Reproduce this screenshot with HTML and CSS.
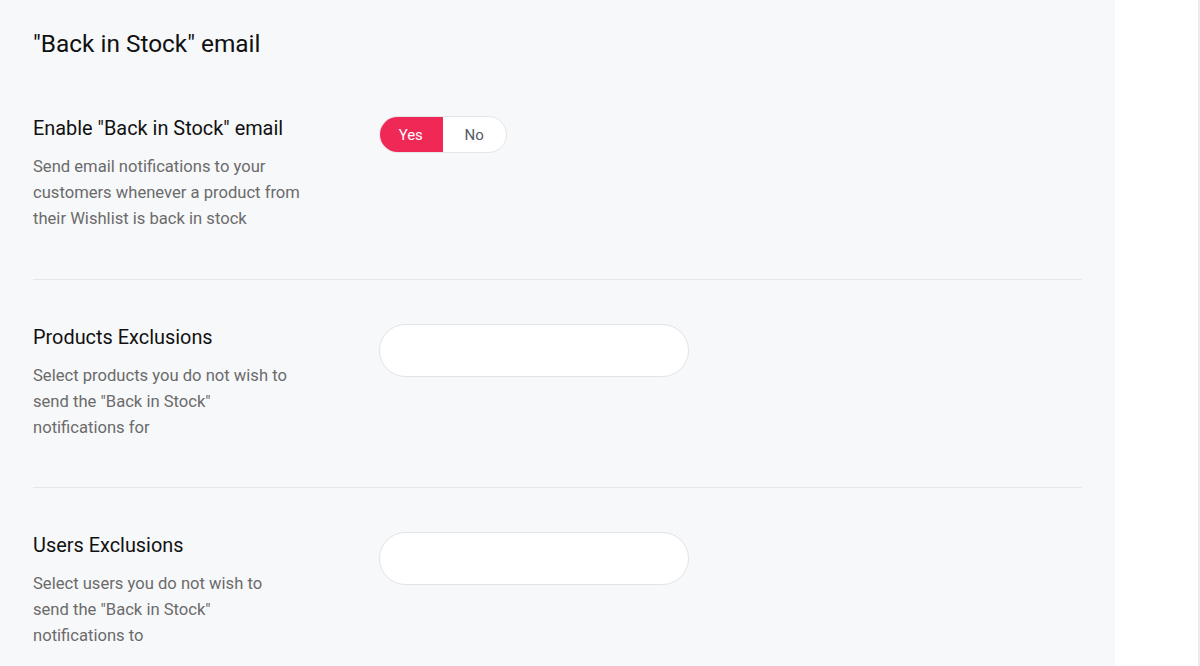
FILE: index.html
```html
<!DOCTYPE html>
<html lang="en">
<head>
<meta charset="utf-8">
<title>Back in Stock email</title>
<link rel="stylesheet" href="styles.css">
</head>
<body>
<div class="page">
  <main class="panel">
    <h1 class="heading">"Back in Stock" email</h1>

    <section class="row first">
      <div class="label-col">
        <h2 class="title">Enable "Back in Stock" email</h2>
        <p class="desc">Send email notifications to your customers whenever a product from their Wishlist is back in stock</p>
      </div>
      <div class="control-col">
        <div class="toggle">
          <span class="opt opt-on">Yes</span>
          <span class="opt opt-off">No</span>
        </div>
      </div>
    </section>

    <section class="row">
      <div class="label-col">
        <h2 class="title">Products Exclusions</h2>
        <p class="desc">Select products you do not wish to send the "Back in Stock" notifications for</p>
      </div>
      <div class="control-col">
        <div class="pill-input"></div>
      </div>
    </section>

    <section class="row last">
      <div class="label-col">
        <h2 class="title">Users Exclusions</h2>
        <p class="desc">Select users you do not wish to send the "Back in Stock" notifications to</p>
      </div>
      <div class="control-col">
        <div class="pill-input"></div>
      </div>
    </section>
  </main>
  <aside class="side"></aside>
</div>
</body>
</html>
```

FILE: styles.css
```css
* { box-sizing: border-box; }
html, body { margin: 0; padding: 0; height: 100%; }
body {
  font-family: Roboto, "Noto Sans", Arial, sans-serif;
  background: #ffffff;
  overflow: hidden;
}
.page {
  display: flex;
  height: 666px;
}
.panel {
  width: 1115px;
  flex: 0 0 1115px;
  background: #f7f8fa;
  padding: 28px 33px 0 33px;
}
.side {
  flex: 1;
  background: #ffffff;
  border-right: 2px solid #ececec;
}
.heading {
  margin: 0;
  font-size: 24.4px;
  line-height: 32px;
  font-weight: 400;
  color: #111111;
}
.row {
  display: flex;
  padding: 46px 0 46px;
  border-bottom: 1px solid #e6e7ea;
}
.row.first { padding-top: 57px; padding-bottom: 47px; }
.row.last { border-bottom: none; }
.label-col {
  flex: 0 0 346px;
  width: 346px;
}
.title {
  margin: 0;
  font-size: 19.9px;
  line-height: 24px;
  font-weight: 400;
  color: #111111;
}
.desc {
  margin: 13px 0 0;
  max-width: 268px;
  font-size: 16.6px;
  line-height: 26px;
  color: #6b6b6b;
}
.control-col {
  flex: 1;
  margin-top: -1px;
}
.toggle {
  display: flex;
  width: 128px;
  height: 37px;
  border-radius: 19px;
  overflow: hidden;
  border: 1px solid #e4e5e8;
  background: #ffffff;
}
.opt {
  flex: 1;
  display: flex;
  align-items: center;
  justify-content: center;
  font-size: 15px;
  color: #555b66;
}
.opt-on {
  background: #ef2856;
  color: #ffffff;
  margin: -1px 0 -1px -1px;
}
.pill-input {
  width: 310px;
  height: 53px;
  margin-top: -1px;
  border-radius: 27px;
  border: 1px solid #e2e3e6;
  background: #ffffff;
}
```
